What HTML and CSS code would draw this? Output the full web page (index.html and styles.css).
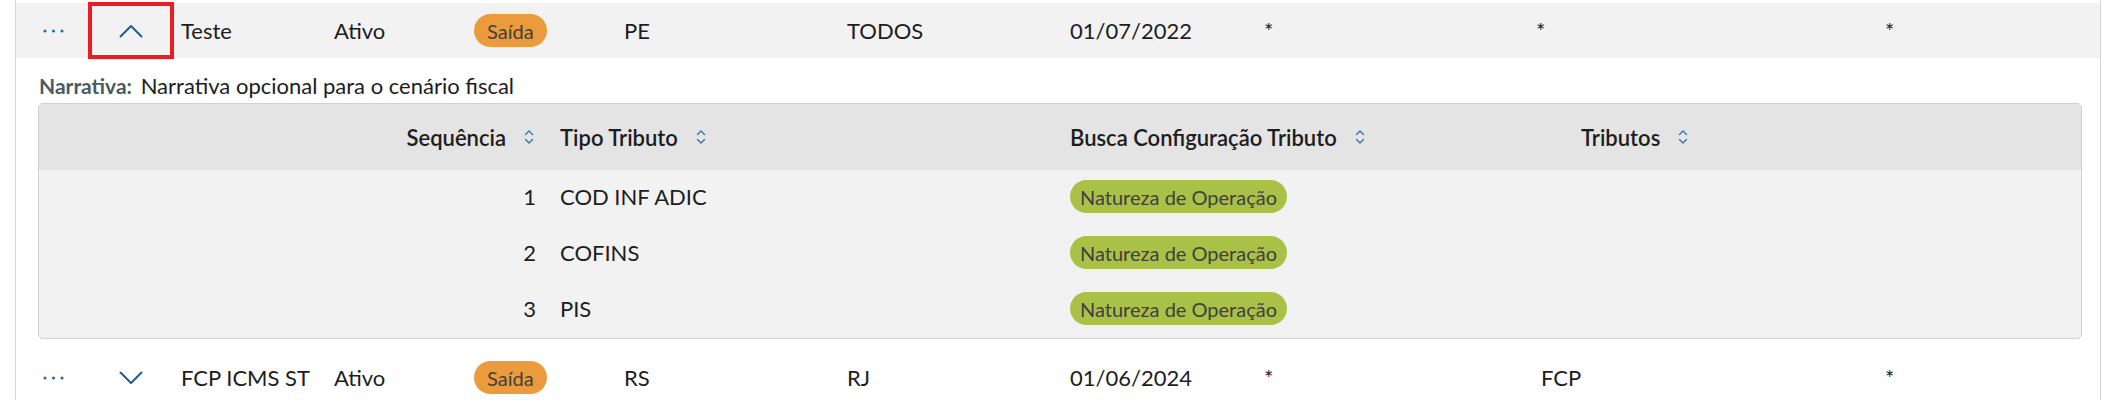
FILE: index.html
```html
<!DOCTYPE html>
<html lang="pt-BR">
<head>
<meta charset="utf-8">
<title>Cenários fiscais</title>
<link rel="stylesheet" href="styles.css">
</head>
<body>
<div class="list">
  <div class="row row-expanded">
    <div class="cell cell-actions">
      <svg class="icon-more" width="24" height="6" viewBox="0 0 24 6"><circle cx="3" cy="3" r="1.6"/><circle cx="11.5" cy="3" r="1.6"/><circle cx="20" cy="3" r="1.6"/></svg>
    </div>
    <div class="cell cell-toggle">
      <svg class="icon-chevron" width="24" height="14" viewBox="0 0 24 14"><polyline points="1.5,12.5 12,2 22.5,12.5"/></svg>
      <span class="highlight"></span>
    </div>
    <div class="cell">Teste</div>
    <div class="cell">Ativo</div>
    <div class="cell"><span class="tag tag-orange">Saída</span></div>
    <div class="cell">PE</div>
    <div class="cell">TODOS</div>
    <div class="cell">01/07/2022</div>
    <div class="cell cell-wild">*</div>
    <div class="cell cell-wild">*</div>
    <div class="cell cell-wild">*</div>
  </div>

  <div class="detail">
    <div class="narrative"><span class="narrative-label">Narrativa:</span> Narrativa opcional para o cenário fiscal</div>
    <div class="subtable">
      <div class="sub-head">
        <div class="sub-cell sub-num">Sequência <svg class="icon-sort" width="10" height="16" viewBox="0 0 10 16"><polyline points="1.5,5.5 5,2 8.5,5.5"/><polyline points="1.5,10.5 5,14 8.5,10.5"/></svg></div>
        <div class="sub-cell">Tipo Tributo <svg class="icon-sort" width="10" height="16" viewBox="0 0 10 16"><polyline points="1.5,5.5 5,2 8.5,5.5"/><polyline points="1.5,10.5 5,14 8.5,10.5"/></svg></div>
        <div class="sub-cell">Busca Configuração Tributo <svg class="icon-sort" width="10" height="16" viewBox="0 0 10 16"><polyline points="1.5,5.5 5,2 8.5,5.5"/><polyline points="1.5,10.5 5,14 8.5,10.5"/></svg></div>
        <div class="sub-cell">Tributos <svg class="icon-sort" width="10" height="16" viewBox="0 0 10 16"><polyline points="1.5,5.5 5,2 8.5,5.5"/><polyline points="1.5,10.5 5,14 8.5,10.5"/></svg></div>
      </div>
      <div class="sub-row">
        <div class="sub-cell sub-num">1</div>
        <div class="sub-cell">COD INF ADIC</div>
        <div class="sub-cell"><span class="tag tag-green">Natureza de Operação</span></div>
        <div class="sub-cell"></div>
      </div>
      <div class="sub-row">
        <div class="sub-cell sub-num">2</div>
        <div class="sub-cell">COFINS</div>
        <div class="sub-cell"><span class="tag tag-green">Natureza de Operação</span></div>
        <div class="sub-cell"></div>
      </div>
      <div class="sub-row">
        <div class="sub-cell sub-num">3</div>
        <div class="sub-cell">PIS</div>
        <div class="sub-cell"><span class="tag tag-green">Natureza de Operação</span></div>
        <div class="sub-cell"></div>
      </div>
    </div>
  </div>

  <div class="row">
    <div class="cell cell-actions">
      <svg class="icon-more" width="24" height="6" viewBox="0 0 24 6"><circle cx="3" cy="3" r="1.6"/><circle cx="11.5" cy="3" r="1.6"/><circle cx="20" cy="3" r="1.6"/></svg>
    </div>
    <div class="cell cell-toggle">
      <svg class="icon-chevron" width="24" height="14" viewBox="0 0 24 14"><polyline points="1.5,1.5 12,12 22.5,1.5"/></svg>
    </div>
    <div class="cell">FCP ICMS ST</div>
    <div class="cell">Ativo</div>
    <div class="cell"><span class="tag tag-orange">Saída</span></div>
    <div class="cell">RS</div>
    <div class="cell">RJ</div>
    <div class="cell">01/06/2024</div>
    <div class="cell cell-wild">*</div>
    <div class="cell">FCP</div>
    <div class="cell cell-wild">*</div>
  </div>
</div>
</body>
</html>
```

FILE: styles.css
```css
html, body {
  margin: 0;
  padding: 0;
  background: #ffffff;
}

body {
  font-family: "Lato", "Noto Sans", sans-serif;
  color: #1d1d1d;
  font-size: 22px;
}

.list {
  margin-left: 15px;
  width: 2084px;
  border-left: 1px solid #d6d6d6;
  border-right: 1px solid #d6d6d6;
  padding-top: 3px;
  height: 397px;
}

.row {
  display: grid;
  grid-template-columns: 72px 85px 153px 140px 150px 223px 223px 199px 272px 349px 218px;
  height: 55px;
  align-items: center;
}

.row-expanded {
  background: #f2f2f2;
}

.cell {
  padding: 0 8px;
  white-space: nowrap;
  height: 100%;
  display: flex;
  align-items: center;
}

.cell-wild {
  padding-left: 3px;
}

.cell-actions {
  justify-content: center;
  padding: 0 0 0 3px;
}

.cell-toggle {
  justify-content: center;
  padding: 0;
  position: relative;
}

.icon-more circle {
  fill: #2b6c9c;
}

.icon-chevron polyline {
  fill: none;
  stroke: #1f5e8c;
  stroke-width: 2;
  stroke-linecap: round;
  stroke-linejoin: round;
}

.highlight {
  position: absolute;
  top: -1px;
  bottom: -1px;
  left: 0;
  right: -1px;
  border: 4px solid #ec1c24;
  pointer-events: none;
}

.tag {
  display: inline-flex;
  align-items: center;
  height: 33px;
  border-radius: 17px;
  font-size: 20px;
  color: #404040;
  white-space: nowrap;
}

.tag-orange {
  background: #eb9b3c;
  padding: 0 13px;
}

.tag-green {
  background: #a9c146;
  padding: 0 10px;
}

.detail {
  padding: 0 18px 11px 22px;
}

.narrative {
  padding: 14px 0 0 1px;
  height: 28px;
  line-height: 28px;
  white-space: nowrap;
}

.narrative-label {
  font-size: 21px;
  font-weight: 700;
  color: #4b5b61;
  margin-right: 3px;
}

.subtable {
  margin-top: 3px;
  border: 1px solid #d0d0d0;
  border-radius: 5px;
  overflow: hidden;
  background: #f2f2f2;
}

.sub-head,
.sub-row {
  display: grid;
  grid-template-columns: 513px 510px 511px 508px;
  align-items: center;
}

.sub-head {
  height: 66px;
  background: #e4e4e4;
  font-weight: 600;
}

.sub-row {
  height: 56px;
  padding-bottom: 3px;
  box-sizing: border-box;
}

.sub-cell {
  padding: 0 8px;
  display: flex;
  align-items: center;
  white-space: nowrap;
}

.sub-num {
  justify-content: flex-end;
  padding-right: 16px;
}

.sub-head .sub-num {
  padding-right: 18px;
}

.icon-sort {
  margin-left: 18px;
  flex: none;
}

.icon-sort polyline {
  fill: none;
  stroke: #2f73ad;
  stroke-width: 1.3;
  stroke-linecap: round;
  stroke-linejoin: round;
}
```
